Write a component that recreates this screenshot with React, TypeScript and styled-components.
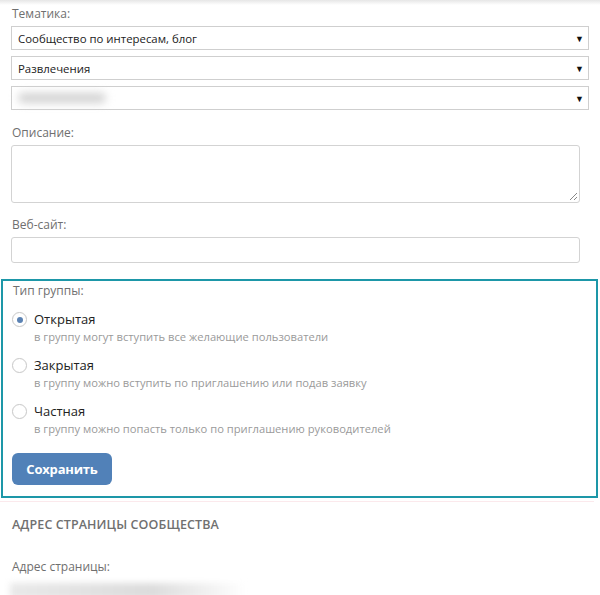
import React from "react";
import styled, { createGlobalStyle } from "styled-components";

const GlobalStyle = createGlobalStyle`
  html, body {
    margin: 0;
    padding: 0;
    background: #fff;
    font-family: "Open Sans", "Noto Sans", sans-serif;
  }
`;

const Page = styled.div`
  width: 600px;
  height: 595px;
  overflow: hidden;
  background: linear-gradient(#e6e6e6, #fff 5px);
  padding-top: 6px;
  box-sizing: border-box;
`;

const Section = styled.div`
  padding: 0 11px;
  display: flex;
  flex-direction: column;
`;

const Label = styled.div<{ $mt?: number; $mb?: number; $ml?: number }>`
  font-size: 12px;
  color: #6f6f6f;
  line-height: 16px;
  margin-top: ${(p) => p.$mt ?? 0}px;
  margin-bottom: ${(p) => p.$mb ?? 4}px;
  margin-left: ${(p) => p.$ml ?? 1}px;
`;

const SelectBox = styled.div`
  height: 24px;
  width: 578px;
  box-sizing: border-box;
  border: 1px solid #cfcfcf;
  display: flex;
  align-items: center;
  justify-content: space-between;
  padding: 0 4px 0 6px;
  font-size: 11.4px;
  color: #222;
  margin-bottom: 6px;
  background: #fff;
`;

const Arrow = styled.span`
  font-size: 9px;
  color: #111;
`;

const Blur = styled.div<{ $w: number }>`
  width: ${(p) => p.$w}px;
  height: 10px;
  border-radius: 5px;
  background: #d2d2d2;
  filter: blur(4px);
`;

const TextArea = styled.div`
  position: relative;
  width: 569px;
  height: 58px;
  box-sizing: border-box;
  border: 1px solid #d3d3d3;
  border-radius: 3px;
`;

const Grip = styled.svg`
  position: absolute;
  right: 1px;
  bottom: 1px;
`;

const Input = styled.div`
  width: 569px;
  height: 26px;
  box-sizing: border-box;
  border: 1px solid #d3d3d3;
  border-radius: 3px;
`;

const GroupBox = styled.div`
  margin: 16px 0 0 1px;
  width: 597px;
  height: 219px;
  box-sizing: border-box;
  border: 2px solid #1d97a8;
  padding: 2px 9px 0;
  display: flex;
  flex-direction: column;
`;

const Option = styled.div`
  display: grid;
  grid-template-columns: 22px 1fr;
  margin-bottom: 10px;
`;

const Radio = styled.span<{ $on?: boolean }>`
  width: 15px;
  height: 15px;
  border-radius: 50%;
  border: 1px solid #c8c8c8;
  box-shadow: 0 0 1px rgba(0, 0, 0, 0.08);
  box-sizing: border-box;
  margin-top: 3px;
  display: flex;
  align-items: center;
  justify-content: center;
  &::after {
    content: "";
    width: 6px;
    height: 6px;
    border-radius: 50%;
    background: ${(p) => (p.$on ? "#5b82b3" : "transparent")};
  }
`;

const OptionTitle = styled.div`
  font-size: 13px;
  color: #222;
  line-height: 20px;
`;

const OptionDesc = styled.div`
  font-size: 11.2px;
  color: #9a9a9a;
  line-height: 16px;
`;

const SaveButton = styled.button`
  margin-top: 6px;
  width: 100px;
  height: 32px;
  border: none;
  border-radius: 6px;
  background: #5181b8;
  color: #fff;
  font-family: "Open Sans", "Noto Sans", sans-serif;
  font-weight: 700;
  font-size: 13px;
  padding: 0;
  letter-spacing: -0.2px;
`;

const Divider = styled.div`
  height: 1px;
  margin: 3px 6px 0 0;
  background: #fbe9ec;
`;

const Heading = styled.div`
  margin: 14px 0 0 12px;
  font-size: 12.5px;
  font-weight: 600;
  color: #707070;
  text-transform: uppercase;
  letter-spacing: 0.1px;
`;

const BottomBlur = styled.div`
  margin: 8px 0 0 10px;
  width: 235px;
  height: 16px;
  background: linear-gradient(90deg, #e9e9e9, #dcdcdc 60%, #fff);
  filter: blur(3px);
`;

const options = [
  { title: "Открытая", desc: "в группу могут вступить все желающие пользователи", on: true },
  { title: "Закрытая", desc: "в группу можно вступить по приглашению или подав заявку" },
  { title: "Частная", desc: "в группу можно попасть только по приглашению руководителей" },
];

export default function App() {
  return (
    <Page>
      <GlobalStyle />
      <Section>
        <Label>Тематика:</Label>
        <SelectBox>
          <span>Сообщество по интересам, блог</span>
          <Arrow>▼</Arrow>
        </SelectBox>
        <SelectBox>
          <span>Развлечения</span>
          <Arrow>▼</Arrow>
        </SelectBox>
        <SelectBox>
          <Blur $w={88} />
          <Arrow>▼</Arrow>
        </SelectBox>
        <Label $mt={9}>Описание:</Label>
        <TextArea>
          <Grip width="10" height="10" viewBox="0 0 10 10">
            <path d="M9 2 L2 9 M9 6 L6 9" stroke="#888" strokeWidth="1" />
          </Grip>
        </TextArea>
        <Label $mt={14}>Веб-сайт:</Label>
        <Input />
      </Section>
      <GroupBox>
        <Label $mb={10}>Тип группы:</Label>
        {options.map((o) => (
          <Option key={o.title}>
            <Radio $on={o.on} />
            <div>
              <OptionTitle>{o.title}</OptionTitle>
              <OptionDesc>{o.desc}</OptionDesc>
            </div>
          </Option>
        ))}
        <SaveButton>Сохранить</SaveButton>
      </GroupBox>
      <Divider />
      <Heading>Адрес страницы сообщества</Heading>
      <Label $mt={26} $ml={12}>Адрес страницы:</Label>
      <BottomBlur />
    </Page>
  );
}
